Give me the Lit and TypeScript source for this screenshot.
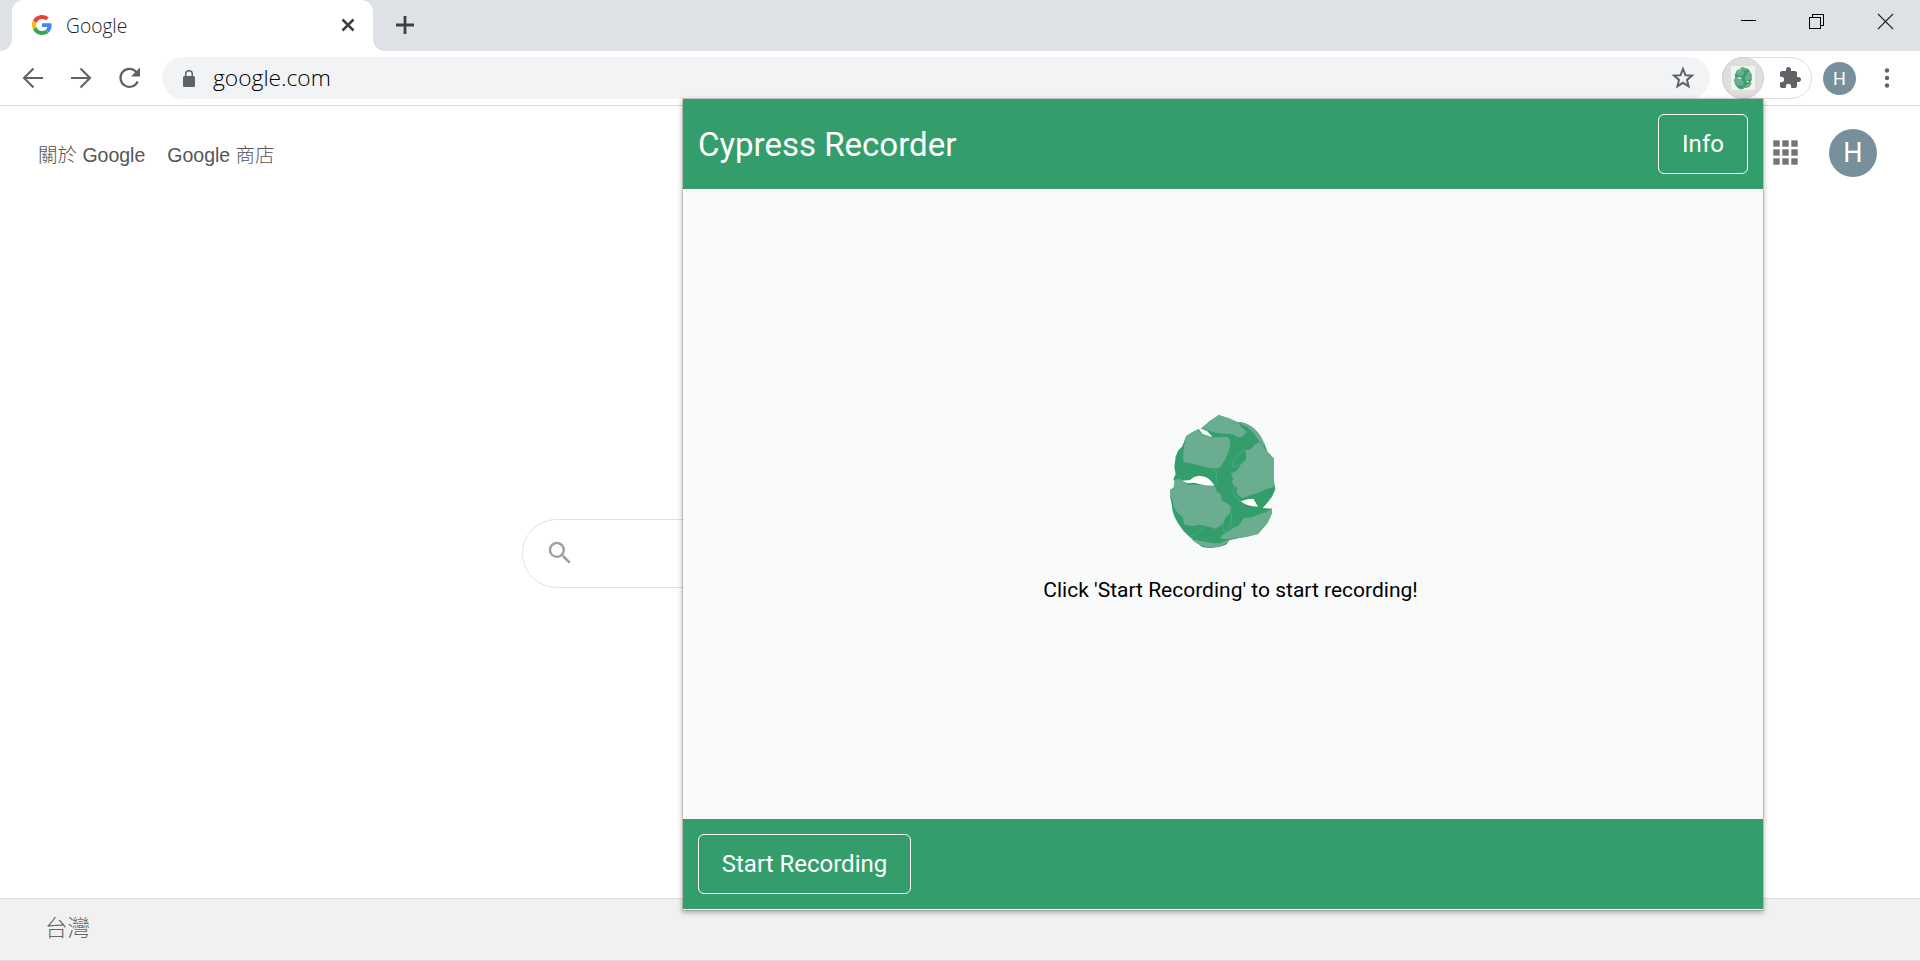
import { LitElement, html, css, svg } from "lit";
import { customElement } from "lit/decorators.js";

const seed = svg`
  <path fill="#339e6c" d="M154 86L180 64L206 45L262 66C292 66 318 84 334 114L345 136L352 155L371 175L371 240L376 268L366 290L352 308L338 324L366 326L365 342L352 370L324 402L238 421L228 434Q190 450 155 440L120 412L100 392L84 370Q66 340 66 318L60 288V270L72 262L75 246L70 238L77 222L73 200L77 170L84 152L96 140L108 110L124 98L146 87Z"/>
  <g fill="#6bad90">
    <path d="M154 84L180 62L206 45L236 54L262 66L274 80L290 96L276 112L262 111L248 102L220 101L190 97L170 90Z"/>
    <path d="M262 66C292 66 318 84 334 112L345 134L341 138L326 122L310 98L290 80Z"/>
    <path d="M108 108Q125 96 146 90L156 103L172 108L188 113L210 110L232 111Q243 120 240 140Q232 175 207 205L176 203L154 198L124 190L100 186Q98 150 108 108Z"/>
    <path d="M326 126L338 136L345 146L352 160L371 175V262L350 266L330 276L300 286L278 294L268 288L258 278L262 264L250 254L246 246L249 236L243 220L260 212L274 192L288 178V150L302 148L312 136Z"/>
    <path d="M74 240L88 236L112 254L150 254L188 257L196 262L200 274L212 282L216 302L230 308L244 322L240 338L228 352L214 376L196 386L176 380L150 374L130 378L104 374L98 352L84 340L72 322L68 300L60 288V270L70 266Z"/>
    <path d="M366 326L365 342L352 370L324 402L290 411L238 418L214 416L212 408L240 392L252 382L264 378L276 362L282 354L306 352L324 344L344 338Z"/>
    <path d="M124 418L136 420L158 424L188 430L212 430L222 424L238 421Q222 440 188 443Q150 442 124 418Z"/>
  </g>
  <g fill="none" stroke="#55a982" stroke-width="2.5">
    <path d="M186 206Q206 206 198 250M288 150Q242 172 248 200Q274 200 288 178M256 256Q236 278 272 304M242 334Q250 370 232 398Q212 402 222 358M165 379Q140 408 120 408"/>
  </g>
  <g fill="#fff">
    <path d="M146 87L158 88L172 94L188 112L170 106L158 102Z"/>
    <path d="M96 242L120 240L132 231L148 227L164 230Q184 238 193 257L164 256L132 248L112 250Z"/>
    <path d="M272 304L292 298L310 296L324 320Q292 320 272 304Z"/>
  </g>`;

@customElement("tab-strip")
class TabStrip extends LitElement {
  static styles = css`
    :host { display: flex; height: 51px; background: #dee1e6; box-sizing: border-box; }
    .lead { width: 12px; background: #fff; }
    .lead i { display: block; height: 51px; background: #dee1e6; border-bottom-right-radius: 12px; }
    .tab { width: 361px; background: #fff; border-radius: 12px 12px 0 0; display: flex; align-items: center; box-sizing: border-box; padding: 0 17px 1px 20px; }
    .name { flex: 1; margin: 1px 0 0 14px; font: 300 19.2px "Open Sans", sans-serif; color: #222; }
    .rest { flex: 1; background: #fff; }
    .bar { height: 51px; background: #dee1e6; border-bottom-left-radius: 12px; display: flex; box-sizing: border-box; padding: 0 26px 0 22px; }
    .plus { margin-top: 15px; }
    .win { margin-left: auto; display: flex; gap: 52px; padding-top: 13px; }
    svg { display: block; }
  `;
  render() {
    return html`
      <div class="lead"><i></i></div>
      <div class="tab">
        <svg width="20" height="20" viewBox="0 0 48 48">
          <path fill="#EA4335" d="M24 9.5c3.54 0 6.71 1.22 9.21 3.6l6.85-6.85C35.9 2.38 30.47 0 24 0 14.62 0 6.51 5.38 2.56 13.22l7.98 6.19C12.43 13.72 17.74 9.5 24 9.5z"/>
          <path fill="#4285F4" d="M46.98 24.55c0-1.57-.15-3.09-.38-4.55H24v9.02h12.94c-.58 2.96-2.26 5.48-4.78 7.18l7.73 6c4.51-4.18 7.09-10.36 7.09-17.65z"/>
          <path fill="#FBBC05" d="M10.53 28.59a14.5 14.5 0 0 1 0-9.18l-7.98-6.19a24 24 0 0 0 0 21.56l7.98-6.19z"/>
          <path fill="#34A853" d="M24 48c6.48 0 11.93-2.13 15.89-5.81l-7.73-6c-2.15 1.45-4.92 2.3-8.16 2.3-6.26 0-11.57-4.22-13.47-9.91l-7.98 6.19C6.51 42.62 14.62 48 24 48z"/>
        </svg>
        <span class="name">Google</span>
        <svg width="16" height="16" viewBox="0 0 16 16" stroke="#3c4043" stroke-width="2.5"><path d="M2.500 2.500L13.500 13.500M13.500 2.500L2.500 13.500"/></svg>
      </div>
      <div class="rest"><div class="bar">
        <svg class="plus" width="20" height="20" viewBox="0 0 20 20" stroke="#3c4043" stroke-width="2.8"><path d="M1 10H19M10 1V19"/></svg>
        <div class="win">
          <svg width="17" height="17" viewBox="0 0 17 17" stroke="#000"><path d="M2 7.500H17"/></svg>
          <svg width="17" height="17" viewBox="0 0 17 17" stroke="#000" fill="none" shape-rendering="crispEdges"><path d="M1.500 4.500H12.500V15.500H1.500ZM4.500 4V1.500H15.500V12.500H13"/></svg>
          <svg width="17" height="17" viewBox="0 0 17 17" stroke="#222" stroke-width="1.1"><path d="M1 1L16 16M16 1L1 16"/></svg>
        </div>
      </div></div>`;
  }
}

@customElement("tool-bar")
class ToolBar extends LitElement {
  static styles = css`
    :host { display: flex; align-items: center; height: 55px; box-sizing: border-box; border-bottom: 1px solid #d9dadc; background: #fff; padding: 0 16px 0 22px; }
    svg { display: block; flex: none; }
    .nav { display: flex; gap: 25px; width: 140px; }
    .omni { display: flex; align-items: center; width: 1548px; height: 42px; border-radius: 21px; background: #f1f3f4; box-sizing: border-box; padding: 0 15px 0 20px; }
    .lock { margin-top: 1px; }
    .url { flex: 1; margin: -2px 0 0 17px; font: 300 22.8px "Open Sans", sans-serif; color: #000; }
    .ext { display: flex; align-items: center; width: 90px; height: 42px; margin-left: 12px; border: 1px solid #dfdfe0; border-radius: 21px; box-sizing: border-box; }
    .act { width: 42px; height: 42px; margin-left: -1px; border-radius: 50%; background: #dedede; border: 1px solid #cfcfcf; box-sizing: border-box; display: grid; place-items: center; }
    .chip { width: 24px; height: 24px; background: #f2f2f2; display: grid; place-items: center; }
    .puzzle { margin-left: 15px; }
    .me { width: 33px; height: 33px; margin-left: 11px; border-radius: 50%; background: #78909c; color: #fff; font: 18px/34px Roboto, sans-serif; text-align: center; }
    .dots { margin-left: 28px; }
  `;
  render() {
    return html`
      <div class="nav">
        <svg width="22" height="22" viewBox="0 0 22 22" fill="none" stroke="#5f6368" stroke-width="2.1"><path d="M21 11H3M11.500 1.500L2 11L11.500 20.500"/></svg>
        <svg width="24" height="22" viewBox="0 0 24 22" fill="none" stroke="#5f6368" stroke-width="2.1"><path d="M2 11H20M11.500 1.500L21 11L11.500 20.500"/></svg>
        <svg width="24" height="22" viewBox="0 0 24 22" fill="none" stroke="#5f6368" stroke-width="2.200"><path d="M19.700 14.500A9 9 0 1 1 18.500 5.200"/><path fill="#5f6368" stroke="none" d="M22 .5V9.500H13Z"/></svg>
      </div>
      <div class="omni">
        <svg class="lock" width="14" height="20" viewBox="0 0 14 20"><rect x="1" y="7" width="12" height="11" rx="1.500" fill="#5f6368"/><path d="M3.700 8V5A3.300 3.300 0 0 1 10.300 5V8" fill="none" stroke="#5f6368" stroke-width="1.500"/></svg>
        <span class="url">google.com</span>
        <svg width="24" height="24" viewBox="0 0 24 24" fill="none" stroke="#5f6368" stroke-width="2"><path d="M12 3L14.500 9.200L21 9.600L16 13.900L17.600 20.300L12 16.800L6.400 20.300L8 13.900L3 9.600L9.500 9.200Z"/></svg>
      </div>
      <div class="ext">
        <div class="act"><div class="chip"><svg width="24" height="24" viewBox="2 35 430 415">${seed}</svg></div></div>
        <svg class="puzzle" width="24" height="24" viewBox="1 0 24 24" fill="#5f6368"><path d="M20.500 11H19V7c0-1.100-.9-2-2-2h-4V3.500C13 2.120 11.880 1 10.500 1S8 2.120 8 3.500V5H4c-1.100 0-1.990.9-1.990 2v3.800H3.500c1.490 0 2.700 1.210 2.700 2.700s-1.210 2.700-2.700 2.700H2V20c0 1.100.9 2 2 2h3.800v-1.500c0-1.490 1.210-2.700 2.700-2.700 1.490 0 2.700 1.210 2.700 2.700V22H17c1.100 0 2-.9 2-2v-4h1.500c1.380 0 2.500-1.120 2.500-2.500S21.880 11 20.500 11z"/></svg>
      </div>
      <div class="me">H</div>
      <svg class="dots" width="6" height="22" viewBox="0 0 6 22" fill="#5f6368"><circle cx="3" cy="3.500" r="2.200"/><circle cx="3" cy="11" r="2.200"/><circle cx="3" cy="18.500" r="2.200"/></svg>`;
  }
}

@customElement("recorder-popup")
class RecorderPopup extends LitElement {
  static styles = css`
    :host { display: flex; flex-direction: column; font-family: Roboto, sans-serif; background: #f9fbfa; box-shadow: 0 0 0 1px rgba(0,0,0,.13), 0 2px 5px 1px rgba(0,0,0,.28); }
    .bar { display: flex; align-items: center; justify-content: space-between; height: 90px; padding: 0 15px; background: #339e6c; box-sizing: border-box; color: #fff; }
    .title { font-size: 33px; }
    .btn { height: 60px; border: 1px solid #fff; border-radius: 6px; box-sizing: border-box; padding: 0; font: 24px/58px Roboto, sans-serif; color: #fff; background: none; }
    .info { width: 90px; }
    .start { width: 213px; }
    .body { flex: 1; display: flex; flex-direction: column; align-items: center; padding-top: 211px; }
    svg { display: block; margin-right: 2px; }
    .hint { margin: 18px 0 0 15px; font-size: 21px; line-height: 24px; color: #000; }
    .foot { border-bottom: 1px solid #fff; height: 91px; }
  `;
  render() {
    return html`
      <div class="bar"><span class="title">Cypress Recorder</span><button class="btn info">Info</button></div>
      <div class="body">
        <svg width="145" height="160" viewBox="0 0 435 480">${seed}</svg>
        <div class="hint">Click 'Start Recording' to start recording!</div>
      </div>
      <div class="bar foot"><button class="btn start">Start Recording</button></div>`;
  }
}

@customElement("app-root")
class AppRoot extends LitElement {
  static styles = css`
    :host { display: flex; flex-direction: column; position: relative; width: 1920px; height: 961px; background: #fff; overflow: hidden; font-family: "Liberation Sans", "Noto Sans CJK TC", sans-serif; }
    .top { display: flex; align-items: center; height: 94px; padding: 0 43px 0 38px; color: #555; font-size: 19.5px; font-weight: 300; }
    .top a { margin-right: 22px; white-space: nowrap; }
    .apps { margin: -1px 0 0 auto; }
    .me { width: 48px; height: 48px; margin-left: 31px; border-radius: 50%; background: #78909c; color: #fff; font: 27px/49px Roboto, sans-serif; text-align: center; }
    .main { flex: 1; }
    .search { width: 876px; height: 69px; margin: 319px 0 0 522px; border: 1px solid #dfe1e5; border-radius: 35px; box-sizing: border-box; display: flex; align-items: center; padding: 0 0 2px 22px; }
    .foot { height: 63px; box-sizing: border-box; border-top: 1px solid #dadce0; border-bottom: 1px solid #dadce0; background: #f1f1f1; padding: 13px 0 0 45px; font: 300 22.5px/28px "Noto Sans CJK TC", sans-serif; color: #666; }
    recorder-popup { position: absolute; left: 683px; top: 99px; width: 1080px; height: 811px; }
  `;
  render() {
    const dots = [0, 9, 18];
    return html`
      <tab-strip></tab-strip>
      <tool-bar></tool-bar>
      <div class="top">
        <a>關於 Google</a><a>Google 商店</a>
        <svg class="apps" width="25" height="25" viewBox="0 0 25 25" fill="#757575">
          ${dots.map((y) => dots.map((x) => svg`<rect x=${x + 0.3} y=${y + 0.3} width="6.400" height="6.400"/>`))}
        </svg>
        <div class="me">H</div>
      </div>
      <div class="main">
        <div class="search"><svg width="30" height="30" viewBox="0 0 24 24" fill="#9aa0a6"><path d="M15.500 14h-.79l-.28-.27A6.471 6.471 0 0 0 16 9.500 6.500 6.500 0 1 0 9.500 16c1.610 0 3.090-.59 4.230-1.570l.27.28v.79l5 4.990L20.490 19l-4.990-5zm-6 0C7.010 14 5 11.990 5 9.500S7.010 5 9.500 5 14 7.010 14 9.500 11.990 14 9.500 14z"/></svg></div>
      </div>
      <div class="foot">台灣</div>
      <recorder-popup></recorder-popup>`;
  }
}
